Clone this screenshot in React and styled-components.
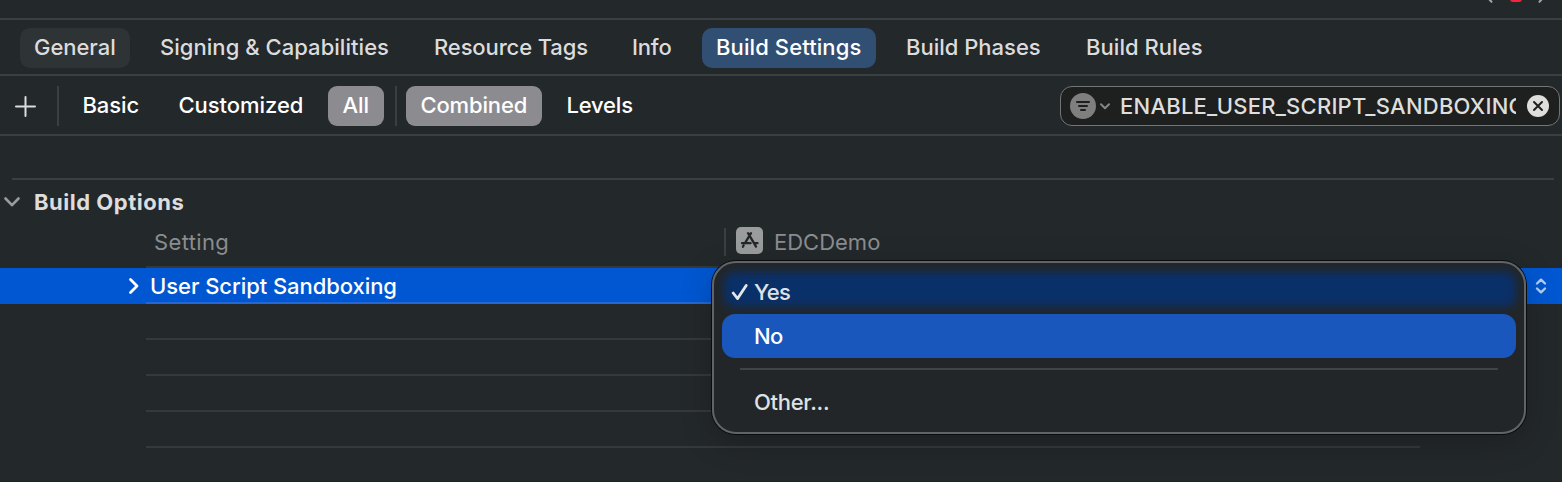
import React from "react";
import styled, { createGlobalStyle } from "styled-components";

const GlobalStyle = createGlobalStyle`
  * { box-sizing: border-box; }
  html, body { margin: 0; background: #23282b; }
  body { overflow: hidden; }
  svg { display: block; flex: none; }
`;

const Window = styled.div`
  position: relative;
  width: 1562px;
  height: 482px;
  overflow: hidden;
  display: flex;
  flex-direction: column;
  background: #23282b;
  border-bottom: 1px solid #1e2024;
  color: #dededf;
  font-family: Inter, "Liberation Sans", sans-serif;
  font-size: 22px;
  line-height: 28px;
  white-space: nowrap;
`;

const Label = styled.span`
  letter-spacing: ${(p) => p.$track || 0}px;
`;

const JumpBar = styled.div`
  flex: none;
  height: 20px;
  display: flex;
  justify-content: flex-end;
  padding-right: 12px;
  border-bottom: 2px solid #3a3f42;
`;

const TabBar = styled.nav`
  flex: none;
  height: 56px;
  display: flex;
  align-items: flex-start;
  gap: 16px;
  padding: 8px 20px 0;
  border-bottom: 2px solid #3a3f42;
`;

const tabFill = { hover: "#2e3336", active: "#314f72" };

const Tab = styled.div`
  flex: none;
  width: ${(p) => p.$width}px;
  height: 40px;
  padding: 5px 0 0 14px;
  border-radius: 10px;
  font-weight: 500;
  color: ${(p) => (p.$state === "active" ? "#fff" : "#dcdcdd")};
  background: ${(p) => tabFill[p.$state] || "transparent"};
`;

const FilterBar = styled.div`
  flex: none;
  height: 60px;
  display: flex;
  align-items: flex-start;
  padding: 10px 2px 0 14px;
  border-bottom: 2px solid #3a3f42;
`;

const AddButton = styled.div`
  width: 43px;
  padding-top: 9px;
`;

const Divider = styled.div`
  width: 2px;
  height: 40px;
  margin-left: ${(p) => p.$before || 0}px;
  background: #3a3f42;
`;

const Scope = styled.div`
  flex: none;
  width: ${(p) => p.$width}px;
  height: 40px;
  margin-left: ${(p) => p.$before}px;
  padding: 5px 0 0 14.5px;
  border-radius: 9px;
  font-weight: 500;
  color: #fff;
  background: ${(p) => (p.$on ? "#8c8c90" : "transparent")};
`;

const SearchField = styled.div`
  width: 500px;
  height: 40px;
  margin-left: auto;
  display: flex;
  align-items: center;
  padding-left: 9px;
  border: 1px solid #737576;
  border-radius: 12px;
  background: #1e1f1f;
`;

const Query = styled.div`
  width: 396px;
  margin: 0 11px 0 9px;
  overflow: hidden;
  font-weight: 450;
  color: #dededd;
`;

const Section = styled.section`
  flex: none;
  height: 44px;
  margin: 42px 8px 0 12px;
  border-top: 2px solid #3a3f42;
`;

const SectionTitle = styled.div`
  display: flex;
  align-items: center;
  gap: 14px;
  height: 44px;
  margin-left: -8px;
  font-weight: 700;
  color: #dddddd;
`;

const ColumnHeader = styled.div`
  flex: none;
  height: 46px;
  margin: 0 142px 0 146px;
  display: flex;
  border-bottom: 2px solid #35393c;
  color: #8b8d8f;
`;

const SettingColumn = styled.div`
  width: 578px;
  padding: 6px 0 0 8px;
`;

const TargetColumn = styled.div`
  flex: 1;
  display: flex;
  align-items: flex-start;
  gap: 11px;
  padding-top: 5px;
  padding-left: 10px;
`;

const ColumnRule = styled.div`
  width: 2px;
  height: 28px;
  margin-top: 6px;
  background: #3a3f42;
`;

const TargetName = styled.div`
  padding-top: 1px;
`;

const SelectedRow = styled.div`
  flex: none;
  height: 36px;
  display: flex;
  background: #0057d1;
  color: #fff;
  font-weight: 500;
`;

const Disclosure = styled.div`
  width: 146px;
  display: flex;
  justify-content: flex-end;
  padding: 9px 6px 0 0;
`;

const SettingCell = styled.div`
  width: 1274px;
  padding: 4px 0 0 4px;
  border-bottom: 2px solid #2468d5;
`;

const Stepper = styled.div`
  margin-left: 115px;
  padding-top: 10px;
`;

const EmptyRow = styled.div`
  flex: none;
  height: 36px;
  margin: 0 142px 0 146px;
  border-bottom: 2px solid #35393c;
`;

const Menu = styled.div`
  position: absolute;
  left: 712px;
  top: 261px;
  width: 814px;
  height: 173px;
  padding: 7px 8px;
  overflow: hidden;
  border: 2px solid #5f6467;
  border-radius: 24px;
  background: #222629;
  font-weight: 500;
`;

const MenuShadow = styled.div`
  position: absolute;
  left: 712px;
  top: 261px;
  width: 814px;
  height: 173px;
  border-radius: 24px;
  box-shadow: 0 0 0 1px #090b0c, 0 8px 32px rgba(0, 0, 0, 0.22);
`;

const MenuItem = styled.div`
  position: relative;
  height: 44px;
  display: flex;
  align-items: center;
  padding-left: ${(p) => (p.$checked ? 9 : 32)}px;
  gap: 6px;
  border-radius: 13px;
  color: ${(p) => (p.$highlight ? "#fff" : "#dfe1e3")};
  background: ${(p) => (p.$highlight ? "#1957bd" : "transparent")};
`;

const RowGlow = styled.div`
  position: absolute;
  left: 2px;
  right: 0;
  top: 2px;
  bottom: 7px;
  border-radius: 10px;
  background: #0a3069;
  filter: blur(4px);
`;

const MenuLabel = styled.span`
  position: relative;
  letter-spacing: ${(p) => p.$track || 0}px;
`;

const MenuSeparator = styled.div`
  height: 2px;
  margin: 10px 18px 10px;
  background: #414447;
`;

const Check = styled.svg`
  position: relative;
`;

const tabs = [
  { label: "General", width: 110, state: "hover", track: -0.05 },
  { label: "Signing & Capabilities", width: 258, track: 0.04 },
  { label: "Resource Tags", width: 182, track: -0.12 },
  { label: "Info", width: 68, track: -0.2 },
  { label: "Build Settings", width: 174, state: "active", track: 0.1 },
  { label: "Build Phases", width: 164, track: 0 },
  { label: "Build Rules", width: 144, track: 0.05 },
];

const Stroke = (props) => (
  <g fill="none" strokeLinecap="round" strokeLinejoin="round" {...props} />
);

export default function App() {
  return (
    <>
      <GlobalStyle />
      <Window>
        <JumpBar>
          <svg width="64" height="4" viewBox="0 0 64 4">
            <Stroke stroke="#a4a6a8" strokeWidth="2">
              <path d="M1-3 5.500 1.700M53.500 1.700 58-3" />
            </Stroke>
            <rect x="24" y="-10" width="12" height="12" rx="3" fill="#f5243f" />
          </svg>
        </JumpBar>

        <TabBar>
          {tabs.map((t) => (
            <Tab key={t.label} $width={t.width} $state={t.state}>
              <Label $track={t.track}>{t.label}</Label>
            </Tab>
          ))}
        </TabBar>

        <FilterBar>
          <AddButton>
            <svg width="23" height="23" viewBox="0 0 23 23">
              <Stroke stroke="#dcdcdd" strokeWidth="2">
                <path d="M2 11.5h19M11.5 2v19" />
              </Stroke>
            </svg>
          </AddButton>
          <Divider />
          <Scope $before={9} $width={84}><Label $track={-0.1}>Basic</Label></Scope>
          <Scope $before={12} $width={152}><Label $track={-0.05}>Customized</Label></Scope>
          <Scope $before={12} $width={56} $on><Label $track={-0.1}>All</Label></Scope>
          <Divider $before={11} />
          <Scope $before={9} $width={136} $on><Label $track={-0.15}>Combined</Label></Scope>
          <Scope $before={10} $width={94}><Label $track={-0.2}>Levels</Label></Scope>
          <SearchField>
            <svg width="41" height="26" viewBox="0 0 41 26">
              <circle cx="13" cy="13" r="13" fill="#7f7f80" />
              <Stroke stroke="#1e1f1f" strokeWidth="2">
                <path d="M7 9h12M9 13h8M11 17h4" />
              </Stroke>
              <Stroke stroke="#858687" strokeWidth="2">
                <path d="M31 11.2l4 4 4-4" />
              </Stroke>
            </svg>
            <Query><Label $track={0.24}>ENABLE_USER_SCRIPT_SANDBOXING</Label></Query>
            <svg width="22" height="22" viewBox="0 0 22 22">
              <circle cx="11" cy="11" r="11" fill="#dededd" />
              <Stroke stroke="#1e1f1f" strokeWidth="2">
                <path d="M7 7l8 8M15 7l-8 8" />
              </Stroke>
            </svg>
          </SearchField>
        </FilterBar>

        <Section>
          <SectionTitle>
            <svg width="16" height="10" viewBox="0 0 16 10">
              <Stroke stroke="#9a9c9d" strokeWidth="2.600">
                <path d="M1.500 1.500 8 8.200l6.500-6.700" />
              </Stroke>
            </svg>
            <Label $track={0.52}>Build Options</Label>
          </SectionTitle>
        </Section>

        <ColumnHeader>
          <SettingColumn><Label $track={0.35}>Setting</Label></SettingColumn>
          <ColumnRule />
          <TargetColumn>
            <svg width="27" height="27" viewBox="0 0 27 27">
              <rect width="27" height="27" rx="5" fill="#9b9c9e" />
              <Stroke stroke="#23282b" strokeWidth="2.300">
                <path d="M12 6.200 18 16.200 20 19.600M15 6.200 9 16.200M6 16.200h8.600M18.200 16.200h3.300M7.600 18.500l-.7 1.200" />
              </Stroke>
            </svg>
            <TargetName><Label>EDCDemo</Label></TargetName>
          </TargetColumn>
        </ColumnHeader>

        <SelectedRow>
          <Disclosure>
            <svg width="12" height="18" viewBox="0 0 12 18">
              <Stroke stroke="#fff" strokeWidth="2.800">
                <path d="M2.500 2.500 9 9l-6.500 6.500" />
              </Stroke>
            </svg>
          </Disclosure>
          <SettingCell><Label $track={-0.06}>User Script Sandboxing</Label></SettingCell>
          <Stepper>
            <svg width="12" height="16" viewBox="0 0 12 16">
              <Stroke stroke="#b7cdf2" strokeWidth="2.400">
                <path d="M2 5.500 6 1.700l4 3.800M2 10.500l4 3.800 4-3.800" />
              </Stroke>
            </svg>
          </Stepper>
        </SelectedRow>
        <EmptyRow />
        <EmptyRow />
        <EmptyRow />
        <EmptyRow />

        <MenuShadow />
        <Menu>
          <MenuItem $checked>
            <RowGlow />
            <Check width="17" height="18" viewBox="0 0 17 18">
              <Stroke stroke="#e4e6ea" strokeWidth="2.800">
                <path d="M2.200 10 6.600 15.600 15.200 2.400" />
              </Stroke>
            </Check>
            <MenuLabel $track={-0.6}>Yes</MenuLabel>
          </MenuItem>
          <MenuItem $highlight><MenuLabel $track={-0.6}>No</MenuLabel></MenuItem>
          <MenuSeparator />
          <MenuItem><MenuLabel $track={-0.3}>Other...</MenuLabel></MenuItem>
        </Menu>
      </Window>
    </>
  );
}
